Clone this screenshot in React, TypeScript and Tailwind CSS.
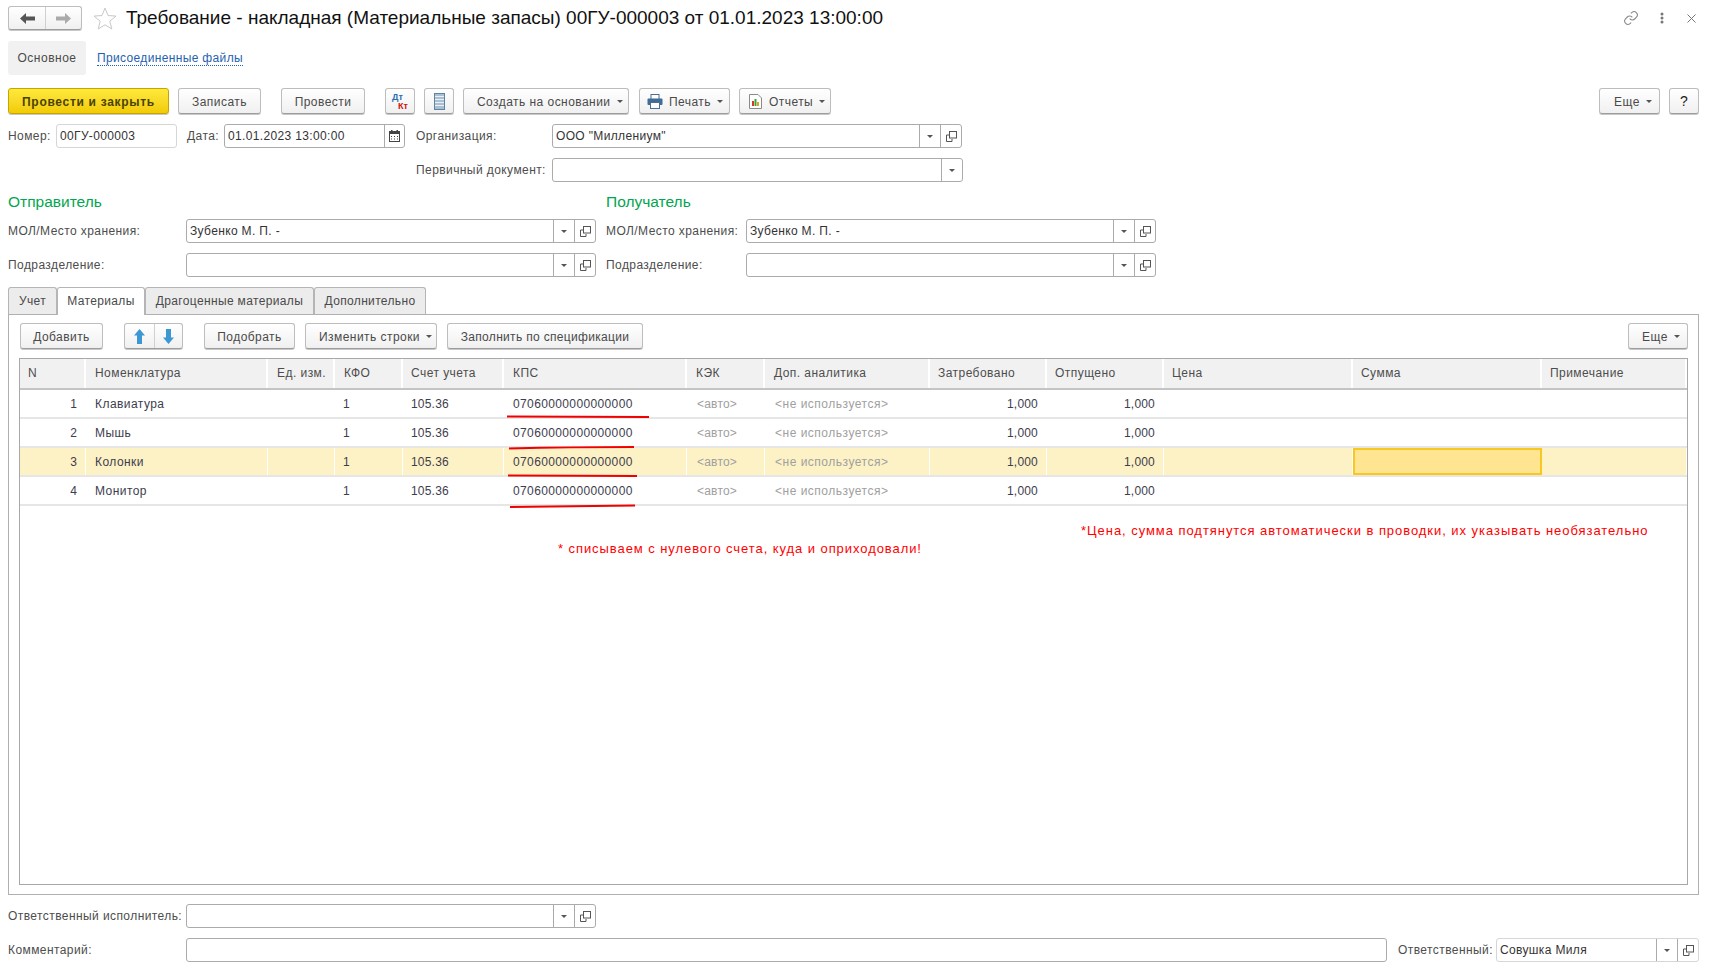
import React from "react";

function Caret({ className = "" }: { className?: string }) {
  return (
    <svg width="6" height="3" viewBox="0 0 6 3" className={className}>
      <path d="M0 0h6L3 3z" fill="#555" />
    </svg>
  );
}

function OpenIcon() {
  return (
    <svg width="11" height="11" viewBox="0 0 11 11" fill="none" stroke="#555" strokeWidth="1">
      <rect x="3.5" y="0.5" width="7" height="6.5" />
      <path d="M3 4H0.5v6.5H6V8" />
    </svg>
  );
}

function CalendarIcon() {
  return (
    <svg width="11" height="12" viewBox="0 0 11 12">
      <rect x="0.5" y="1.5" width="10" height="10" fill="#fff" stroke="#444" />
      <rect x="0" y="1" width="11" height="3" fill="#444" />
      <rect x="2" y="0" width="1.5" height="2" fill="#444" />
      <rect x="7.5" y="0" width="1.5" height="2" fill="#444" />
      <path d="M2 6h1v1H2zM5 6h1v1H5zM8 6h1v1H8zM2 8.500h1v1H2zM5 8.500h1v1H5zM8 8.500h1v1H8z" fill="#444" />
    </svg>
  );
}

function Field({
  w,
  value = "",
  select = false,
  open = false,
  calendar = false,
  light = false,
}: {
  w: string;
  value?: string;
  select?: boolean;
  open?: boolean;
  calendar?: boolean;
  light?: boolean;
}) {
  return (
    <div
      className={`flex h-[24px] shrink-0 items-stretch rounded-[3px] border bg-white ${w} ${
        light ? "border-[#d6d6d6]" : "border-[#ababab]"
      }`}
    >
      <div className="flex-1 truncate pl-[3px] text-[12px] leading-[22px] tracking-[0.35px] text-[#333]">{value}</div>
      {select && (
        <div className="flex w-[21px] items-center justify-center border-l border-[#ababab]">
          <Caret />
        </div>
      )}
      {open && (
        <div className="flex w-[21px] items-center justify-center border-l border-[#ababab]">
          <OpenIcon />
        </div>
      )}
      {calendar && (
        <div className="flex w-[20px] items-center justify-center border-l border-[#ababab]">
          <CalendarIcon />
        </div>
      )}
    </div>
  );
}

function Label({ w, children }: { w: string; children: React.ReactNode }) {
  return (
    <div className={`shrink-0 whitespace-nowrap text-[12px] leading-[25px] tracking-[0.42px] text-[#4d4d4d] ${w}`}>
      {children}
    </div>
  );
}

function Btn({
  w,
  children,
  className = "",
  justify = "justify-center",
}: {
  w: string;
  children: React.ReactNode;
  className?: string;
  justify?: string;
}) {
  return (
    <div
      className={`flex h-[26px] shrink-0 items-center whitespace-nowrap rounded-[3px] border border-[#bdbdbd] border-b-[#9d9d9d] bg-gradient-to-b from-white to-[#f0f0f0] pt-[1px] text-[12px] tracking-[0.45px] text-[#4a4a4a] shadow-[0_1px_0_#c8c8c8] ${justify} ${w} ${className}`}
    >
      {children}
    </div>
  );
}

function PrintIcon() {
  return (
    <svg width="16" height="15" viewBox="0 0 16 15">
      <rect x="4" y="0.500" width="8" height="5" fill="#fff" stroke="#4f6f8f" />
      <rect x="0.500" y="4.500" width="15" height="6.500" rx="1" fill="#3f6d96" />
      <rect x="3.500" y="8.500" width="9" height="6" fill="#fff" stroke="#4f6f8f" />
    </svg>
  );
}

function ReportIcon() {
  return (
    <svg width="13" height="15" viewBox="0 0 13 15">
      <path d="M0.500 0.500h8.500l3.500 3.500v10.500H0.500z" fill="#fff" stroke="#8a8a8a" />
      <rect x="3" y="7" width="2" height="5" fill="#d33" />
      <rect x="5.500" y="5" width="2" height="7" fill="#3a3" />
      <rect x="8" y="8" width="2" height="4" fill="#e0a020" />
    </svg>
  );
}

function ListIcon() {
  return (
    <svg width="11" height="17" viewBox="0 0 11 17">
      <rect x="0.500" y="0.500" width="10" height="16" fill="#a9bfd2" stroke="#5f83a3" />
      <path d="M1 3.500h9M1 6.500h9M1 9.500h9M1 12.500h9" stroke="#eaf0f5" strokeWidth="1" />
    </svg>
  );
}

function ArrowLeft({ color }: { color: string }) {
  return (
    <svg width="15" height="11" viewBox="0 0 15 11">
      <path d="M0 5.500 6 0v3.500h9v4H6V11z" fill={color} />
    </svg>
  );
}

function ArrowVert({ down = false }: { down?: boolean }) {
  return (
    <svg width="11" height="15" viewBox="0 0 11 15" className={down ? "rotate-180" : ""}>
      <path d="M5.500 0 11 6.500H8V15H3V6.500H0z" fill="#3d97d3" />
    </svg>
  );
}

const COLS =
  "grid grid-cols-[66px_182px_67px_68px_101px_183px_78px_165px_117px_117px_189px_189px_145px]";

const HEAD: [string, string][] = [
  ["N", "pl-[8px]"],
  ["Номенклатура", "pl-[9px]"],
  ["Ед. изм.", "pl-[9px]"],
  ["КФО", "pl-[9px]"],
  ["Счет учета", "pl-[8px]"],
  ["КПС", "pl-[9px]"],
  ["КЭК", "pl-[9px]"],
  ["Доп. аналитика", "pl-[9px]"],
  ["Затребовано", "pl-[8px]"],
  ["Отпущено", "pl-[8px]"],
  ["Цена", "pl-[8px]"],
  ["Сумма", "pl-[8px]"],
  ["Примечание", "pl-[8px]"],
];

const ROWS = ["Клавиатура", "Мышь", "Колонки", "Монитор"];

function Row({ n, name, selected }: { n: number; name: string; selected: boolean }) {
  const bg = selected ? "bg-[#fdf2c5]" : "bg-white";
  const base = `h-full truncate border-r ${selected ? "border-white" : "border-transparent"} ${bg} px-[8px] leading-[28px]`;
  const grey = "text-[#a0a0a0] pl-[10px]";
  return (
    <div className={`${COLS} h-[29px] border-b-[2px] border-[#e6e6e6] bg-white text-[12px] tracking-[0.2px] text-[#3d3d4d]`}>
      <div className={`${base} text-right`}>{n}</div>
      <div className={`${base} pl-[9px] tracking-[0.45px]`}>{name}</div>
      <div className={base}></div>
      <div className={base}>1</div>
      <div className={base}>105.36</div>
      <div className={`${base} pl-[9px] tracking-[0.37px]`}>07060000000000000</div>
      <div className={`${base} ${grey}`}>&lt;авто&gt;</div>
      <div className={`${base} ${grey} tracking-[0.5px]`}>&lt;не используется&gt;</div>
      <div className={`${base} text-right`}>1,000</div>
      <div className={`${base} text-right`}>1,000</div>
      <div className={base}></div>
      {selected ? (
        <div className="h-full border-[2px] border-[#f8c81e] bg-[#ffe592]"></div>
      ) : (
        <div className={base}></div>
      )}
      <div className={base}></div>
    </div>
  );
}

export default function App() {
  return (
    <div
      className="relative flex h-[969px] w-[1715px] flex-col overflow-hidden bg-white pl-[8px] text-[#333]"
      style={{ fontFamily: '"Liberation Sans", Arial, sans-serif' }}
    >
      {/* Title bar */}
      <div className="mt-[6px] flex h-[24px] items-center">
        <div className="flex h-[24px] w-[74px] rounded-[3px] border border-[#bdbdbd] border-b-[#9d9d9d] bg-gradient-to-b from-white to-[#f0f0f0] shadow-[0_1px_0_#c8c8c8]">
          <div className="flex w-[37px] items-center justify-center border-r border-[#d0d0d0]">
            <ArrowLeft color="#555" />
          </div>
          <div className="flex flex-1 items-center justify-center">
            <span className="rotate-180">
              <ArrowLeft color="#aaa" />
            </span>
          </div>
        </div>
        <svg width="24" height="23" viewBox="0 0 24 23" className="ml-[11px]">
          <path
            d="M12 1l3 7.500 8 .6-6.200 5.100 2 7.800L12 17.800 5.200 22l2-7.800L1 9.100l8-.6z"
            fill="#fff"
            stroke="#c8c8c8"
          />
        </svg>
        <div className="ml-[9px] whitespace-nowrap text-[19px] leading-[24px] text-[#111]">
          Требование - накладная (Материальные запасы) 00ГУ-000003 от 01.01.2023 13:00:00
        </div>
        <div className="ml-auto flex items-center">
          <svg width="16" height="16" viewBox="0 0 24 24" fill="none" stroke="#888" strokeWidth="1.600" className="mr-[21px]">
            <path d="M10 13a5 5 0 0 0 7.500.5l3-3a5 5 0 0 0-7-7l-1.700 1.700" />
            <path d="M14 11a5 5 0 0 0-7.500-.5l-3 3a5 5 0 0 0 7 7l1.700-1.700" />
          </svg>
          <svg width="4" height="12" viewBox="0 0 4 12" className="mr-[23px]">
            <circle cx="2" cy="2" r="1.500" fill="#777" />
            <circle cx="2" cy="6" r="1.500" fill="#777" />
            <circle cx="2" cy="10" r="1.500" fill="#777" />
          </svg>
          <svg width="9" height="9" viewBox="0 0 9 9" stroke="#777" strokeWidth="1" className="mr-[19px]">
            <path d="M0.500 0.500l8 8M8.500 0.500l-8 8" />
          </svg>
        </div>
      </div>

      {/* Page tabs */}
      <div className="mt-[11px] flex h-[34px] items-center">
        <div className="flex h-[34px] w-[78px] items-center justify-center rounded-[3px] bg-[#f1f1f1] text-[12px] tracking-[0.5px] text-[#4a4a4a]">
          Основное
        </div>
        <div className="ml-[11px] border-b border-dotted border-[#1f62b0] text-[12px] leading-[14px] tracking-[0.35px] text-[#1f62b0]">
          Присоединенные файлы
        </div>
      </div>

      {/* Command bar */}
      <div className="mt-[13px] flex h-[26px] items-center">
        <div className="flex h-[26px] w-[161px] items-center justify-center rounded-[3px] border border-[#c7a500] bg-gradient-to-b from-[#ffe93a] to-[#f2cb00] pt-[1px] text-[12px] font-bold tracking-[0.7px] text-[#4a4300] shadow-[0_1px_0_#c8c8c8]">
          Провести и закрыть
        </div>
        <Btn w="w-[83px]" className="ml-[9px]">Записать</Btn>
        <Btn w="w-[84px]" className="ml-[20px]">Провести</Btn>
        <Btn w="w-[30px]" className="ml-[20px] flex-col !items-start pl-[6px]">
          <span className="text-[9px] font-bold leading-[9px] tracking-normal text-[#2a6fb5]">Дт</span>
          <span className="ml-[6px] text-[9px] font-bold leading-[9px] tracking-normal text-[#d01010]">Кт</span>
        </Btn>
        <Btn w="w-[30px]" className="ml-[9px]"><ListIcon /></Btn>
        <Btn w="w-[166px]" className="ml-[9px] pl-[13px]" justify="justify-start">
          Создать на основании
          <Caret className="ml-[6px]" />
        </Btn>
        <Btn w="w-[91px]" className="ml-[10px] pl-[7px]" justify="justify-start">
          <PrintIcon />
          <span className="ml-[6px]">Печать</span>
          <Caret className="ml-[6px]" />
        </Btn>
        <Btn w="w-[92px]" className="ml-[9px] pl-[9px]" justify="justify-start">
          <ReportIcon />
          <span className="ml-[7px]">Отчеты</span>
          <Caret className="ml-[6px]" />
        </Btn>
        <Btn w="w-[61px]" className="ml-[768px] pl-[14px]" justify="justify-start">
          Еще
          <Caret className="ml-[6px]" />
        </Btn>
        <Btn w="w-[30px]" className="ml-[9px] text-[14px] font-normal text-[#222]">?</Btn>
      </div>

      {/* Number / date / organization */}
      <div className="mt-[10px] flex h-[24px]">
        <Label w="w-[48px]">Номер:</Label>
        <Field w="w-[121px]" value="00ГУ-000003" light />
        <Label w="ml-[10px] w-[37px]">Дата:</Label>
        <Field w="w-[181px]" value="01.01.2023 13:00:00" calendar />
        <Label w="ml-[11px] w-[136px]">Организация:</Label>
        <Field w="w-[410px]" value={'ООО "Миллениум"'} select open />
      </div>
      <div className="mt-[10px] flex h-[24px]">
        <Label w="ml-[408px] w-[136px]">Первичный документ:</Label>
        <Field w="w-[411px]" select />
      </div>

      {/* Sender / receiver */}
      <div className="mt-[10px] flex h-[20px] text-[15.5px] leading-[20px] text-[#00a650]">
        <div className="w-[598px]">Отправитель</div>
        <div>Получатель</div>
      </div>
      <div className="mt-[7px] flex h-[24px]">
        <Label w="w-[178px]">МОЛ/Место хранения:</Label>
        <Field w="w-[410px]" value="Зубенко М. П. -" select open />
        <Label w="ml-[10px] w-[140px]">МОЛ/Место хранения:</Label>
        <Field w="w-[410px]" value="Зубенко М. П. -" select open />
      </div>
      <div className="mt-[10px] flex h-[24px]">
        <Label w="w-[178px]">Подразделение:</Label>
        <Field w="w-[410px]" select open />
        <Label w="ml-[10px] w-[140px]">Подразделение:</Label>
        <Field w="w-[410px]" select open />
      </div>

      {/* Tabs */}
      <div className="relative z-10 mt-[10px] flex h-[28px] text-[12px] tracking-[0.35px] text-[#4a4a4a]">
        <div className="flex h-[27px] w-[49px] items-center justify-center rounded-t-[3px] border border-b-0 border-[#b5b5b5] bg-[#ececec] pb-[1px]">Учет</div>
        <div className="flex h-[28px] w-[88px] items-center justify-center rounded-t-[3px] border border-b-0 border-[#b5b5b5] bg-white pb-[2px]">Материалы</div>
        <div className="flex h-[27px] w-[169px] items-center justify-center rounded-t-[3px] border border-b-0 border-[#b5b5b5] bg-[#ececec] pb-[1px]">Драгоценные материалы</div>
        <div className="flex h-[27px] w-[112px] items-center justify-center rounded-t-[3px] border border-b-0 border-[#b5b5b5] bg-[#ececec] pb-[1px]">Дополнительно</div>
      </div>

      {/* Panel */}
      <div className="-mt-[1px] flex h-[581px] w-[1691px] flex-col border border-[#b0b0b0] px-[10px] pt-[8px]">
        <div className="flex h-[26px] items-center">
          <Btn w="w-[83px]" className="ml-[1px]">Добавить</Btn>
          <div className="ml-[21px] flex h-[26px] w-[59px] rounded-[3px] border border-[#bdbdbd] border-b-[#9d9d9d] bg-gradient-to-b from-white to-[#f0f0f0] shadow-[0_1px_0_#c8c8c8]">
            <div className="flex w-[30px] items-center justify-center border-r border-[#d0d0d0]"><ArrowVert /></div>
            <div className="flex flex-1 items-center justify-center"><ArrowVert down /></div>
          </div>
          <Btn w="w-[91px]" className="ml-[21px]">Подобрать</Btn>
          <Btn w="w-[132px]" className="ml-[10px] pl-[13px]" justify="justify-start">
            Изменить строки
            <Caret className="ml-[6px]" />
          </Btn>
          <Btn w="w-[196px]" className="ml-[10px] !tracking-[0.32px]">Заполнить по спецификации</Btn>
          <Btn w="w-[60px]" className="ml-[985px] pl-[13px]" justify="justify-start">
            Еще
            <Caret className="ml-[6px]" />
          </Btn>
        </div>

        {/* Table */}
        <div className="mt-[9px] flex h-[527px] w-[1669px] flex-col border border-[#a8a8a8]">
          <div className={`${COLS} h-[31px] border-b-[2px] border-[#c4c4c4] text-[12px] tracking-[0.45px] text-[#4d4d4d]`}>
            {HEAD.map(([t, c]) => (
              <div key={t} className={`truncate border-r-[2px] border-white bg-[#f1f1f1] leading-[29px] ${c}`}>
                {t}
              </div>
            ))}
          </div>
          {ROWS.map((r, i) => (
            <Row key={r} n={i + 1} name={r} selected={i === 2} />
          ))}
          <div className="mt-[16px] h-[18px] whitespace-nowrap pl-[1061px] text-[13px] leading-[18px] tracking-[0.95px] text-[#ff0000]">
            *Цена, сумма подтянутся автоматически в проводки, их указывать необязательно
          </div>
          <div className="h-[18px] whitespace-nowrap pl-[538px] text-[13px] leading-[18px] tracking-[0.93px] text-[#ff0000]">
            * списываем с нулевого счета, куда и оприходовали!
          </div>
        </div>
      </div>

      {/* Footer */}
      <div className="mt-[9px] flex h-[24px]">
        <Label w="w-[178px]">Ответственный исполнитель:</Label>
        <Field w="w-[410px]" select open />
      </div>
      <div className="mt-[10px] flex h-[24px]">
        <Label w="w-[178px]">Комментарий:</Label>
        <Field w="w-[1201px]" />
        <Label w="ml-[11px] w-[98px]">Ответственный:</Label>
        <Field w="w-[203px]" value="Совушка Миля" select open light />
      </div>

      {/* Hand-drawn red underlines */}
      <svg width="1715" height="969" viewBox="0 0 1715 969" className="pointer-events-none absolute left-0 top-0" fill="none" stroke="#f00000" strokeWidth="2">
        <path d="M507 416.500L649 417" />
        <path d="M509 448.500Q570 447 634 447" />
        <path d="M508 475.500L637 476" />
        <path d="M510 507Q575 506 635 505.500" />
      </svg>
    </div>
  );
}
